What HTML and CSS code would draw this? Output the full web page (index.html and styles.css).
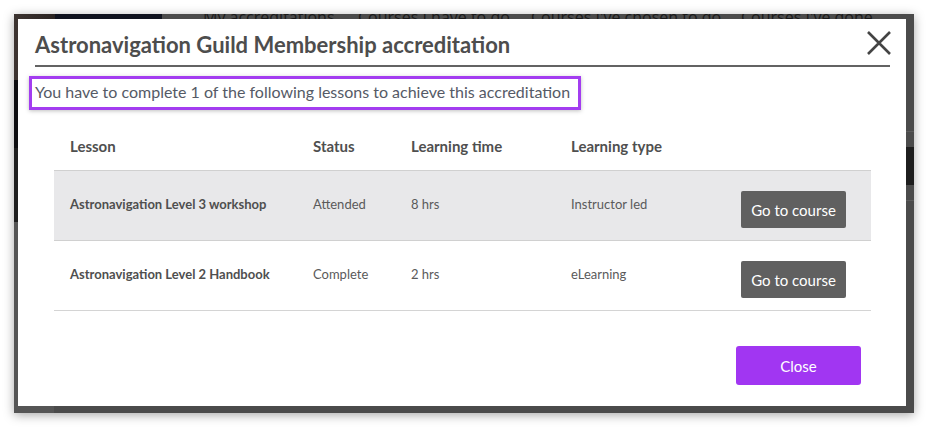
FILE: index.html
```html
<!DOCTYPE html>
<html>
<head>
<meta charset="utf-8">
<link rel="stylesheet" href="styles.css">
</head>
<body>
<div class="screen">
  <div class="page">
    <div class="page-head">
      <div class="photo"></div>
      <div class="brand"></div>
      <nav class="tabs">
        <span>My accreditations</span>
        <span>Courses I have to do</span>
        <span>Courses I've chosen to do</span>
        <span>Courses I've done</span>
      </nav>
    </div>
    <div class="page-body">
      <div class="side-left">
        <div class="band b-black"></div>
        <div class="band b-dark"><span>s</span></div>
        <div class="band b-gray"><span>a</span></div>
      </div>
      <div class="side-right">
        <div class="band r-gap"></div>
        <div class="band r-gap2"></div>
        <div class="band r-dark"><span>e</span></div>
        <div class="band r-gap3"></div>
      </div>
    </div>
  </div>

  <div class="modal">
    <div class="modal-head">
      <h1 class="modal-title">Astronavigation Guild Membership accreditation</h1>
      <button class="close-x" aria-label="Close">
        <svg width="26" height="26" viewBox="0 0 26 26"><path d="M2 2 L24 24 M24 2 L2 24" stroke="#444" stroke-width="2.6" fill="none"/></svg>
      </button>
    </div>
    <p class="intro"><span class="intro-box">You have to complete 1 of the following lessons to achieve this accreditation</span></p>

    <div class="lessons">
      <div class="row row-head">
        <div>Lesson</div>
        <div>Status</div>
        <div>Learning time</div>
        <div>Learning type</div>
        <div></div>
      </div>
      <div class="row row-shaded">
        <div class="lesson-name">Astronavigation Level 3 workshop</div>
        <div>Attended</div>
        <div>8 hrs</div>
        <div>Instructor led</div>
        <div class="cell-btn"><button class="btn-course">Go to course</button></div>
      </div>
      <div class="row">
        <div class="lesson-name">Astronavigation Level 2 Handbook</div>
        <div>Complete</div>
        <div>2 hrs</div>
        <div>eLearning</div>
        <div class="cell-btn"><button class="btn-course">Go to course</button></div>
      </div>
    </div>

    <div class="modal-foot">
      <button class="btn-close">Close</button>
    </div>
  </div>
</div>
</body>
</html>
```

FILE: styles.css
```css
* { box-sizing: border-box; }
html, body { margin: 0; padding: 0; background: #ffffff; }
body {
  width: 928px;
  height: 427px;
  padding: 14px;
  font-family: Lato, "Open Sans", sans-serif;
  overflow: hidden;
}
.screen {
  position: relative;
  width: 900px;
  height: 399px;
  background: #4b4b4b;
  box-shadow: 0 2px 10px rgba(0,0,0,0.35);
  overflow: hidden;
}
.page { display: flex; flex-direction: column; height: 100%; }
.page-head { display: flex; height: 66px; }
.photo { width: 41px; background: linear-gradient(90deg, #3d3431, #2a2422); }
.brand { width: 107px; background: #10131f; }
.tabs {
  display: flex;
  gap: 0;
  padding-left: 41px;
  font-family: "Open Sans", sans-serif;
  font-size: 16px;
  color: #1a1a1a;
  margin-top: -8px;
}
.tabs span:nth-child(1) { width: 155px; }
.tabs span:nth-child(2) { width: 173px; }
.tabs span:nth-child(3) { width: 210px; }
.page-body { display: flex; justify-content: space-between; flex: 1; }
.side-left { width: 40px; display: flex; flex-direction: column; }
.side-left .band span, .side-right .band span { font-family: "Open Sans", sans-serif; font-size: 16px; }
.b-black { height: 68px; background: #0f0f12; }
.b-dark { height: 74px; background: #1f1f1f; color: #777; padding-left: 4px; padding-top: 24px; }
.b-gray { flex: 1; background: #555; color: #222; padding-left: 4px; padding-top: 16px; }
.side-right { width: 40px; display: flex; flex-direction: column; }
.r-gap { height: 52px; border-bottom: 1px solid #5c5c5c; }
.r-gap2 { height: 15px; }
.r-dark { height: 38px; background: #1d1d1d; color: #666; padding-left: 2px; padding-top: 6px; }
.r-gap3 { height: 16px; border-bottom: 1px solid #5c5c5c; }

.modal {
  position: absolute;
  left: 4px;
  top: 5px;
  width: 888px;
  height: 387px;
  background: #ffffff;
  padding: 0 16px 0 17px;
  color: #4a4a4a;
}
.modal-head {
  display: flex;
  align-items: center;
  justify-content: space-between;
  height: 48px;
  border-bottom: 2px solid #636363;
}
.modal-title {
  margin: 0;
  padding-top: 4px;
  font-size: 22px;
  font-weight: 700;
  color: #4d4d4d;
  letter-spacing: 0;
}
.close-x {
  border: 0;
  background: none;
  padding: 0;
  margin-right: -2px;
  margin-top: 2px;
  width: 26px;
  height: 26px;
  display: flex;
}
.intro { margin: 9px 0 0 -6px; height: 34px; }
.intro-box {
  display: inline-block;
  height: 34px;
  border: 3px solid #a33df0;
  padding: 3px 8px 0 3px;
  font-size: 16px;
  color: #555a66;
  box-shadow: 0 1px 4px rgba(0,0,0,0.25);
}
.lessons { margin: 15px 19px 0 19px; border-bottom: 1px solid #d4d4d4; }
.row {
  display: grid;
  grid-template-columns: 243px 98px 160px 1fr auto;
  align-items: center;
  height: 70px;
  padding: 0 25px 4px 16px;
  border-top: 1px solid #d0d0d0;
  font-size: 13px;
  color: #5a5a5a;
}
.row-head {
  border-top: 0;
  height: 45px;
  padding-bottom: 3px;
  font-size: 15px;
  font-weight: 700;
  color: #4f4f4f;
}
.row-shaded { background: #e8e8ea; }
.lesson-name { font-weight: 700; color: #4f4f4f; }
.cell-btn { margin-top: 12px; }
.btn-course {
  width: 105px;
  height: 37px;
  border: 0;
  border-radius: 2px;
  background: #606060;
  color: #ffffff;
  font-family: Lato, sans-serif;
  font-size: 15px;
  padding: 0;
}
.modal-foot { display: flex; justify-content: flex-end; padding-right: 29px; margin-top: 35px; }
.btn-close {
  width: 125px;
  height: 39px;
  border: 0;
  border-radius: 3px;
  background: #a136f2;
  color: #ffffff;
  font-family: Lato, sans-serif;
  font-size: 15px;
  padding: 0;
}
```
